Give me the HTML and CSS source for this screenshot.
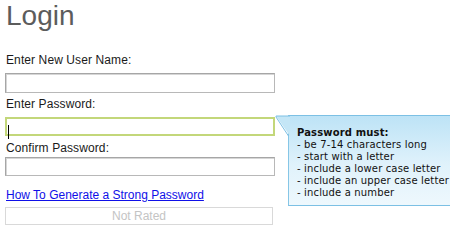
FILE: index.html
```html
<!DOCTYPE html>
<html lang="en">
<head>
  <meta charset="UTF-8">
  <meta name="viewport" content="width=device-width, initial-scale=1.0">
  <title>Login</title>
  <link rel="stylesheet" href="styles.css">
</head>
<body>
  <div class="page">
    <h1 class="title">Login</h1>
    <form class="login">
      <label class="field-label" for="userName">Enter New User Name:</label>
      <input class="field" type="text" id="userName">

      <label class="field-label label-pw" for="password">Enter Password:</label>
      <div class="pw-wrap">
        <input class="field field-active" type="password" id="password">
      </div>

      <label class="field-label label-confirm" for="confirm">Confirm Password:</label>
      <input class="field field-confirm" type="password" id="confirm">

      <a class="help-link" href="#">How To Generate a Strong Password</a>
      <div class="rating">Not Rated</div>
    </form>

    <div class="hint">
      <svg class="hint-arrow" width="15" height="22" viewBox="0 0 15 22">
        <polygon points="1,1 15,1 15,21" fill="#c4e6f6" />
        <polyline points="15,1 1,1 1,2 13.5,21" fill="none" stroke="#7cc0e4" stroke-width="1" />
      </svg>
      <div class="hint-box">
        <strong>Password must:</strong>
        <ul class="hint-list">
          <li>- be 7-14 characters long</li>
          <li>- start with a letter</li>
          <li>- include a lower case letter</li>
          <li>- include an upper case letter</li>
          <li>- include a number</li>
        </ul>
      </div>
    </div>
  </div>
</body>
</html>
```

FILE: styles.css
```css
html, body {
  margin: 0;
  padding: 0;
  overflow: hidden;
  background: #fff;
}

.page {
  position: relative;
  padding: 0 5px;
  font-family: "Liberation Sans", Arial, sans-serif;
  font-size: 12px;
  color: #1a1a1a;
}

.title {
  margin: 0;
  font-size: 28px;
  line-height: 32px;
  font-weight: normal;
  color: #5c5c5c;
  padding-left: 1px;
}

.field-label {
  display: block;
  margin-top: 21px;
  line-height: 14px;
  padding-left: 1px;
  letter-spacing: 0.1px;
}

.label-pw {
  margin-top: 4px;
}

.label-confirm {
  margin-top: 5px;
}

.field {
  display: block;
  box-sizing: border-box;
  width: 270px;
  height: 20px;
  margin: 6px 0 0;
  padding: 0 3px;
  border: 1px solid #b8b8b8;
  border-top-color: #a6a6a6;
  border-left-color: #a6a6a6;
  box-shadow: inset 1px 1px 0 #d6d6d6;
  background: #fff;
  outline: none;
}

.pw-wrap {
  position: relative;
  width: 270px;
}

.field-active {
  height: 19px;
  border: 2px solid #c3d77a;
  box-shadow: none;
}

.pw-wrap::after {
  content: "";
  position: absolute;
  left: 3px;
  top: 8px;
  width: 1px;
  height: 14px;
  background: #000;
}

.field-confirm {
  height: 19px;
  margin-top: 2px;
}

.help-link {
  display: block;
  width: max-content;
  margin-top: 12px;
  padding-left: 1px;
  line-height: 14px;
  color: #1010e8;
  text-decoration: underline;
}

.rating {
  box-sizing: border-box;
  width: 268px;
  height: 18px;
  margin-top: 5px;
  border: 1px solid #d9d9d9;
  text-align: center;
  line-height: 16px;
  color: #c4c4c4;
}

.hint {
  position: absolute;
  left: 275px;
  top: 115px;
  display: flex;
  align-items: flex-start;
}

.hint-arrow {
  display: block;
  margin-right: -2px;
  position: relative;
  z-index: 1;
}

.hint-box {
  box-sizing: border-box;
  width: 175px;
  height: 91px;
  padding: 11px 0 0 8px;
  border: 1px solid #7cc0e4;
  border-left-color: #86c6e6;
  background: linear-gradient(#bde3f6, #e0f2fb 55%, #eef8fd);
  font-family: "DejaVu Sans", Verdana, sans-serif;
  font-size: 10px;
  line-height: 12px;
  letter-spacing: 0.15px;
  color: #111;
}

.hint-list {
  list-style: none;
  margin: 0;
  padding: 0;
}
```
